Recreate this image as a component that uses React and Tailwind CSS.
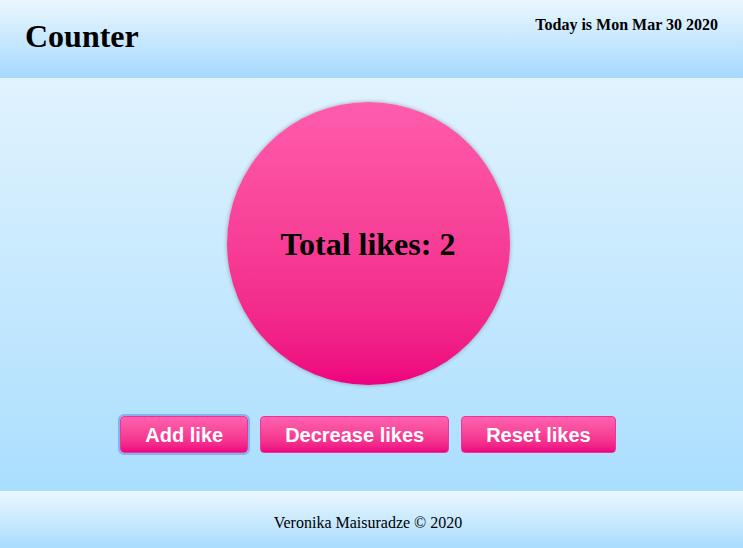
import React, { useState } from 'react';

const serif = "font-['Liberation_Serif','Times_New_Roman',serif]";

const LikeButton = ({ label, onClick, focused }) => (
  <button
    type="button"
    onClick={onClick}
    className={`h-[37px] px-[24px] rounded-[4px] border border-[#f0329a] bg-gradient-to-b from-[#ff62b0] to-[#ee007f] text-white text-[20px] font-bold font-['Liberation_Sans',Arial,sans-serif] leading-none ${
      focused ? 'outline-2 outline-[#82b4f5] outline-offset-0' : ''
    }`}
  >
    {label}
  </button>
);

const App = () => {
  const [likes, setLikes] = useState(2);

  return (
    <div className={`w-[743px] h-[548px] flex flex-col text-black ${serif}`}>
      <header className="h-[78px] shrink-0 flex justify-between items-start px-[25px] bg-gradient-to-b from-[#ebf7fe] to-[#a4d9fd]">
        <h1 className="mt-[18px] text-[32px] font-bold leading-[37px]">Counter</h1>
        <p className="mt-[15px] text-[16px] font-bold leading-[19px]">Today is Mon Mar 30 2020</p>
      </header>

      <main className="flex-1 flex flex-col items-center pt-[24px] pr-[7px] bg-gradient-to-b from-[#e1f3fe] to-[#aadefe]">
        <div className="w-[283px] h-[283px] shrink-0 rounded-full flex items-center justify-center bg-gradient-to-b from-[#ff5cad] to-[#ee007f] shadow-[0_0_4px_rgba(0,0,0,0.3)]">
          <h2 className="text-[32px] font-bold leading-[37px] pt-[2px]">Total likes: {likes}</h2>
        </div>

        <div className="mt-[31px] flex gap-[12px]">
          <LikeButton label="Add like" focused onClick={() => setLikes(likes + 1)} />
          <LikeButton label="Decrease likes" onClick={() => setLikes(Math.max(0, likes - 1))} />
          <LikeButton label="Reset likes" onClick={() => setLikes(0)} />
        </div>
      </main>

      <footer className="h-[57px] shrink-0 flex items-center justify-center pt-[7px] pr-[7px] bg-gradient-to-b from-[#ebf7fe] to-[#a8dcfd]">
        <p className="text-[16px]">Veronika Maisuradze © 2020</p>
      </footer>
    </div>
  );
};

export default App;
